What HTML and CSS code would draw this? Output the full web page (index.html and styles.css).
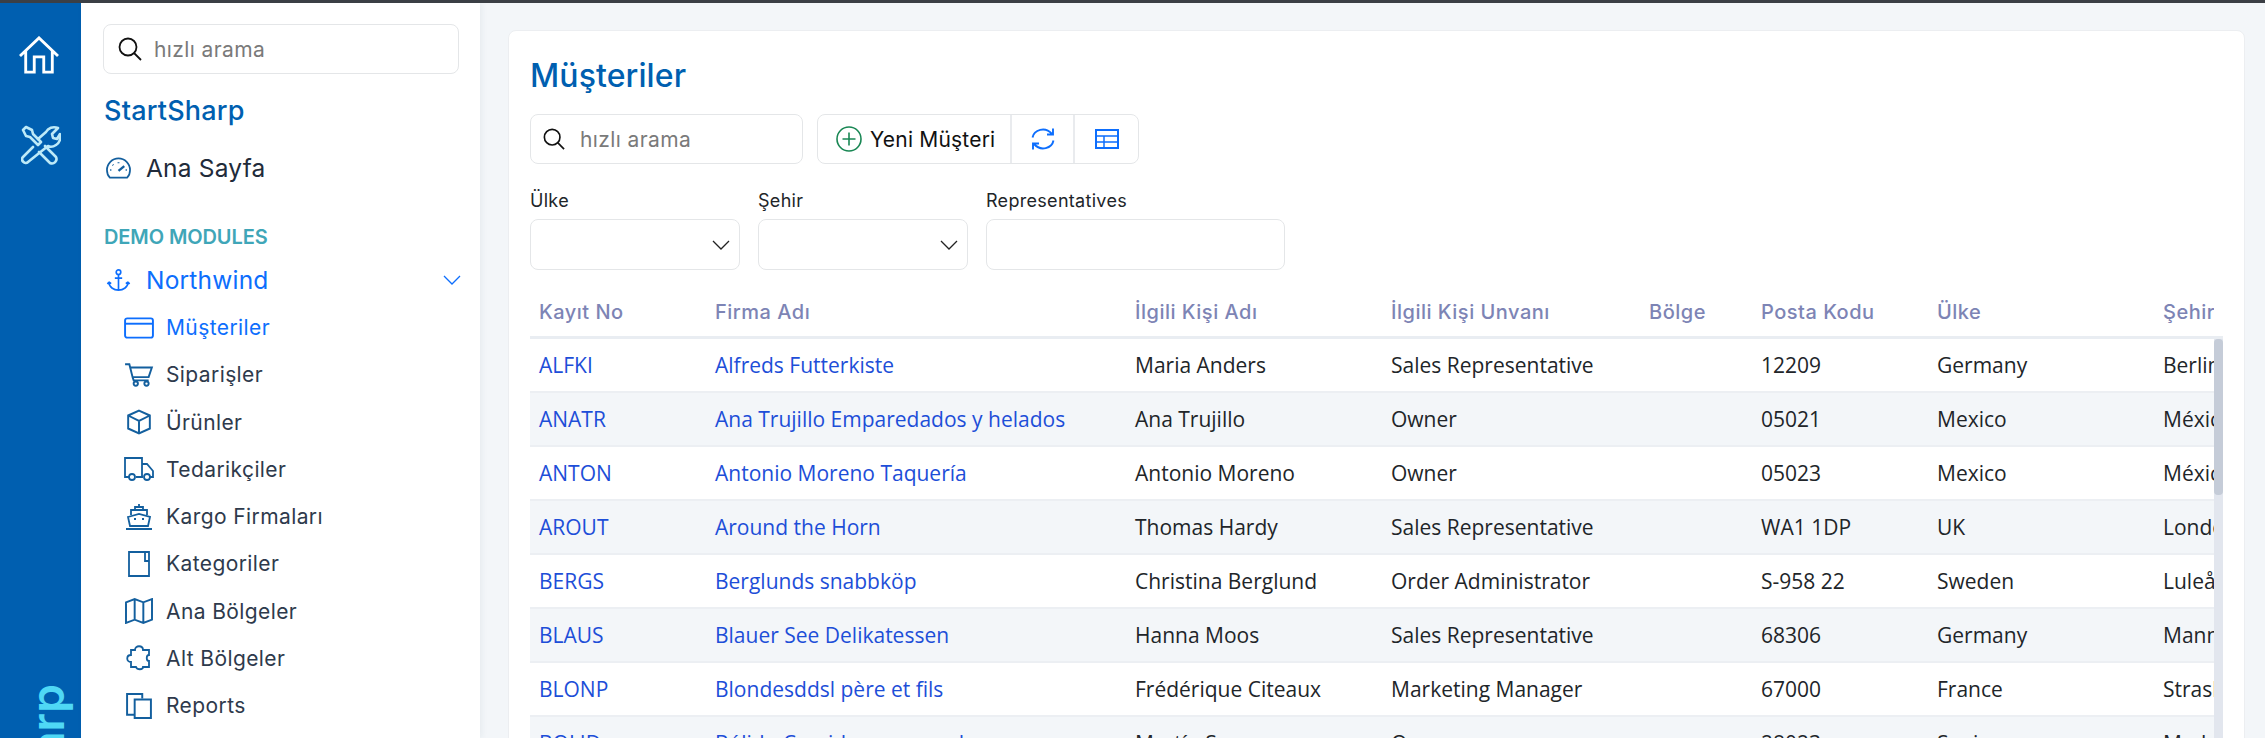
FILE: index.html
```html
<!DOCTYPE html>
<html lang="tr">
<head>
<meta charset="utf-8">
<title>Müşteriler</title>
<link rel="stylesheet" href="styles.css">
</head>
<body>
<div class="topbar"></div>
<div class="shell">
  <aside class="rail">
    <svg class="rail-home" viewBox="0 0 42 40" fill="none" stroke="#fff" stroke-width="3"><path d="M1 21 21 2l20 19M7 16v22h9V22h10v16h9V16"/></svg>
    <svg class="rail-tools" viewBox="0 0 40 40" fill="none" stroke="#bdeaf8" stroke-width="2.600" stroke-linejoin="round" stroke-linecap="round"><path d="M2 5l3-3 6 3 1 4 8 8-3 3-8-8-4-1zM24 21l11 11a4.500 4.500 0 0 1-6 6L18 27"/><path d="M17 14 25 7c2-4 7-6 12-4l-6 6 1 4 4 1 3-5c1 5-1 9-4 11-3 2-6 2-8 1L7 37c-3 3-8-2-5-5l10-10"/></svg>
    <div class="rail-logo">StartSharp</div>
  </aside>
  <nav class="sidebar">
    <div class="search side-search">
      <svg class="search-icon" viewBox="0 0 24 24" fill="none" stroke="#111" stroke-width="1.800"><circle cx="10" cy="10" r="8.500"/><path d="M16 16l7 7"/></svg>
      <span class="placeholder">hızlı arama</span>
    </div>
    <div class="brand">StartSharp</div>
    <div class="nav-top">
      <svg class="nav-icon" viewBox="0 0 26 22" fill="none" stroke="#135f9e" stroke-width="1.800"><path d="M4 21C2 19 1 16 1 13a12 12 0 0 1 24 0c0 3-1 6-3 8z"/><path d="M13 14l6-5" stroke-width="2.400"/><path d="M4.500 13h1M7 7.500l.6.6M13 5v1M20.500 13h1" stroke-width="2"/></svg>
      <span>Ana Sayfa</span>
    </div>
    <div class="nav-section">DEMO MODULES</div>
    <div class="nav-top nav-active">
      <svg class="nav-icon" viewBox="0 0 24 24" fill="none" stroke="#0d6efd" stroke-width="1.800"><circle cx="12" cy="3.500" r="2.500"/><path d="M12 6v17M8 10h8M1.500 14c0 6 5.500 9 10.500 9s10.500-3 10.500-9M1.500 14l-1.500 2.500M1.500 14l2.500 2M22.500 14l-2.500 2M22.500 14l1.500 2.500"/></svg>
      <span>Northwind</span>
      <svg class="nav-chevron" viewBox="0 0 18 10" fill="none" stroke="#0d6efd" stroke-width="1.300"><path d="M1 1l8 8 8-8"/></svg>
    </div>
    <div class="nav-sub nav-current">
      <svg class="sub-icon" viewBox="0 0 28 20" fill="none" stroke="#0d6efd" stroke-width="1.800"><rect x="1" y="1" width="26" height="18" rx="2"/><path d="M1 6h26"/></svg>
      <span>Müşteriler</span>
    </div>
    <div class="nav-sub">
      <svg class="sub-icon" viewBox="0 0 28 22" fill="none" stroke="#135f9e" stroke-width="1.800"><path d="M1 1h4l3 12h15l3-9H6M8 13l1 3h14"/><circle cx="11" cy="19" r="2"/><circle cx="21" cy="19" r="2"/></svg>
      <span>Siparişler</span>
    </div>
    <div class="nav-sub">
      <svg class="sub-icon" viewBox="0 0 24 24" fill="none" stroke="#135f9e" stroke-width="1.800"><path d="M12 1.500 22 6v12l-10 4.500L2 18V6zM2 6l10 5 10-5M12 11v11.500"/></svg>
      <span>Ürünler</span>
    </div>
    <div class="nav-sub">
      <svg class="sub-icon" viewBox="0 0 30 24" fill="none" stroke="#135f9e" stroke-width="1.800"><path d="M5 20H1V1h17v19h-6M18 7h5l6 7v6h-3M18 20h1"/><circle cx="8" cy="20" r="3"/><circle cx="23" cy="20" r="3"/></svg>
      <span>Tedarikçiler</span>
    </div>
    <div class="nav-sub">
      <svg class="sub-icon" viewBox="0 0 26 26" fill="none" stroke="#135f9e" stroke-width="1.800"><path d="M13 0v3M9 6V3h8v3M5 11V6h16v5M2 13l11-3 11 3-2 9H4zM0 25h26"/><path d="M8 15h2M16 15h2" stroke-width="2"/></svg>
      <span>Kargo Firmaları</span>
    </div>
    <div class="nav-sub">
      <svg class="sub-icon" viewBox="0 0 24 26" fill="none" stroke="#135f9e" stroke-width="1.800"><path d="M2 1h20v24H2zM18 1v9h4"/></svg>
      <span>Kategoriler</span>
    </div>
    <div class="nav-sub">
      <svg class="sub-icon" viewBox="0 0 26 24" fill="none" stroke="#135f9e" stroke-width="1.800"><path d="M1 4l8-3 8 3 8-3v19l-8 3-8-3-8 3zM9 1v19M17 4v19"/></svg>
      <span>Ana Bölgeler</span>
    </div>
    <div class="nav-sub">
      <svg class="sub-icon" viewBox="0 0 26 26" fill="none" stroke="#135f9e" stroke-width="1.800"><path d="M9 5c0-5 8-5 8 0h6v5c-3 0-3 6 0 6v6h-6c0 3-6 3-7 0H5v-5c-5 0-5-7 0-7V5z"/></svg>
      <span>Alt Bölgeler</span>
    </div>
    <div class="nav-sub">
      <svg class="sub-icon" viewBox="0 0 24 24" fill="none" stroke="#135f9e" stroke-width="1.800"><path d="M8 20H1V1h14v4"/><path d="M8 6h15v17H8z"/></svg>
      <span>Reports</span>
    </div>
  </nav>
  <main class="content">
    <section class="card">
      <h1 class="title">Müşteriler</h1>
      <div class="toolbar">
        <div class="search tool-search">
          <svg class="search-icon small" viewBox="0 0 24 24" fill="none" stroke="#111" stroke-width="1.800"><circle cx="10" cy="10" r="8.500"/><path d="M16 16l7 7"/></svg>
          <span class="placeholder">hızlı arama</span>
        </div>
        <div class="btn-group">
          <div class="btn btn-new">
            <svg class="btn-plus" viewBox="0 0 26 26" fill="none" stroke="#198754" stroke-width="1.600"><circle cx="13" cy="13" r="12"/><path d="M13 6.500v13M6.500 13h13"/></svg>
            <span>Yeni Müşteri</span>
          </div>
          <div class="btn btn-refresh">
            <svg class="btn-icon" viewBox="0 0 24 24" fill="none" stroke="#0d6efd" stroke-width="1.900"><path d="M1.500 10.500C3 3 14-1 21 7M22 1.500V7.500h-6M22.500 13.500C21 21 10 25 3 17M2 22.500V16.500h6"/></svg>
          </div>
          <div class="btn btn-table">
            <svg class="btn-icon wide" viewBox="0 0 24 20" fill="none" stroke="#0d6efd" stroke-width="2"><rect x="1" y="1" width="22" height="18"/><path d="M1 7h22M1 13h22M9 7v12" stroke-width="1.500"/></svg>
          </div>
        </div>
      </div>
      <div class="filters">
        <div class="filter f-country"><label class="filter-label">Ülke</label>
          <div class="filter-box"><svg class="select-chevron" viewBox="0 0 18 10" fill="none" stroke="#222" stroke-width="1.300"><path d="M1 1l8 8 8-8"/></svg></div></div>
        <div class="filter f-city"><label class="filter-label">Şehir</label>
          <div class="filter-box"><svg class="select-chevron" viewBox="0 0 18 10" fill="none" stroke="#222" stroke-width="1.300"><path d="M1 1l8 8 8-8"/></svg></div></div>
        <div class="filter f-rep"><label class="filter-label">Representatives</label>
          <div class="filter-box"></div></div>
      </div>
      <div class="grid">
        <div class="row head"><div>Kayıt No</div><div>Firma Adı</div><div>İlgili Kişi Adı</div><div>İlgili Kişi Unvanı</div><div>Bölge</div><div>Posta Kodu</div><div>Ülke</div><div class="head-last">Şehir</div></div>
        <div class="viewport">
          <div class="scrollbar"><div class="thumb"></div></div>
          <div class="row"><div class="link">ALFKI</div><div class="link">Alfreds Futterkiste</div><div>Maria Anders</div><div>Sales Representative</div><div></div><div>12209</div><div>Germany</div><div>Berlin</div></div>
          <div class="row alt"><div class="link">ANATR</div><div class="link">Ana Trujillo Emparedados y helados</div><div>Ana Trujillo</div><div>Owner</div><div></div><div>05021</div><div>Mexico</div><div>México D.F.</div></div>
          <div class="row"><div class="link">ANTON</div><div class="link">Antonio Moreno Taquería</div><div>Antonio Moreno</div><div>Owner</div><div></div><div>05023</div><div>Mexico</div><div>México D.F.</div></div>
          <div class="row alt"><div class="link">AROUT</div><div class="link">Around the Horn</div><div>Thomas Hardy</div><div>Sales Representative</div><div></div><div>WA1 1DP</div><div>UK</div><div>London</div></div>
          <div class="row"><div class="link">BERGS</div><div class="link">Berglunds snabbköp</div><div>Christina Berglund</div><div>Order Administrator</div><div></div><div>S-958 22</div><div>Sweden</div><div>Luleå</div></div>
          <div class="row alt"><div class="link">BLAUS</div><div class="link">Blauer See Delikatessen</div><div>Hanna Moos</div><div>Sales Representative</div><div></div><div>68306</div><div>Germany</div><div>Mannheim</div></div>
          <div class="row"><div class="link">BLONP</div><div class="link">Blondesddsl père et fils</div><div>Frédérique Citeaux</div><div>Marketing Manager</div><div></div><div>67000</div><div>France</div><div>Strasbourg</div></div>
          <div class="row alt"><div class="link">BOLID</div><div class="link">Bólido Comidas preparadas</div><div>Martín Sommer</div><div>Owner</div><div></div><div>28023</div><div>Spain</div><div>Madrid</div></div>
        </div>
      </div>
    </section>
  </main>
</div>
</body>
</html>
```
FILE: styles.css
```css
* { box-sizing: border-box; }
html, body { margin: 0; height: 738px; overflow: hidden; }
body { font-family: Inter, "Liberation Sans", sans-serif; background: #f3f6f9; color: #212529; }
.topbar { height: 3px; background: #3b3f45; }
.shell { display: flex; height: 735px; overflow: hidden; }

.rail { width: 81px; flex: none; background: #005fb0; display: flex; flex-direction: column; align-items: center; overflow: hidden; }
.rail-home { width: 44px; height: 38px; margin-top: 33px; margin-right: 3px; flex: none; }
.rail-tools { width: 40px; height: 40px; margin-top: 51px; flex: none; }
.rail-logo { writing-mode: vertical-rl; transform: rotate(180deg); margin-top: auto; margin-bottom: -186px; margin-left: 12px; font-size: 46px; font-weight: 600; line-height: 48px; color: #4fd8f5; flex: none; }

.sidebar { width: 399px; flex: none; background: #fff; padding: 21px 21px 0 22px; box-shadow: 2px 0 6px rgba(40, 60, 90, .06); overflow: hidden; }
.search { display: flex; align-items: center; border: 1px solid #e4e6e8; border-radius: 8px; background: #fff; }
.side-search { height: 50px; padding-left: 14px; }
.search-icon { width: 24px; height: 24px; flex: none; margin-right: 12px; }
.search-icon.small { width: 22px; height: 22px; margin-right: 15px; }
.placeholder { font-size: 21px; color: #7a7a7a; letter-spacing: .4px; }
.brand { margin-top: 12px; font-size: 27px; font-weight: 500; line-height: 50px; color: #005fb0; letter-spacing: .2px; padding-left: 1px; }
.nav-top { display: flex; align-items: center; height: 48px; font-size: 24.500px; font-weight: 400; color: #212b3a; padding-left: 3px; letter-spacing: .2px; }
.brand + .nav-top { margin-top: 8px; }
.nav-icon { width: 25px; height: 22px; flex: none; margin-right: 15px; }
.nav-section { margin-top: 31px; font-size: 20px; font-weight: 600; color: #3fa6b8; line-height: 28px; padding-left: 1px; letter-spacing: -.1px; }
.nav-section + .nav-top { margin-top: 5px; height: 48px; }
.nav-active { color: #0d6efd; }
.nav-chevron { width: 18px; height: 10px; margin-left: auto; margin-right: -2px; }
.nav-sub { display: flex; align-items: center; height: 47.250px; padding-left: 21px; font-size: 21px; letter-spacing: .4px; color: #2e3a4c; }
.nav-sub span { margin-left: 12px; }
.nav-current { color: #0d6efd; }
.sub-icon { width: 30px; height: 26px; flex: none; }

.content { flex: 1; min-width: 0; padding: 27px 20px 0 28px; }
.card { height: 760px; background: #fff; border: 1px solid #eceef1; border-radius: 8px; padding: 0 21px; overflow: hidden; }
.title { margin: 23px 0 0; font-size: 32px; font-weight: 500; line-height: 44px; color: #005fb0; letter-spacing: .1px; }
.toolbar { display: flex; gap: 14px; margin-top: 16px; height: 50px; }
.tool-search { width: 273px; height: 50px; padding-left: 12px; }
.btn-group { display: flex; width: 322px; height: 50px; border: 1px solid #e4e6e8; border-radius: 8px; }
.btn { display: flex; align-items: center; height: 100%; }
.btn-new { width: 194px; padding-left: 18px; font-size: 21px; color: #111; border-right: 2px solid #e9ebee; letter-spacing: .2px; }
.btn-plus { width: 26px; height: 26px; margin-right: 8px; flex: none; }
.btn-refresh { width: 63px; justify-content: center; border-right: 2px solid #e9ebee; }
.btn-table { flex: 1; justify-content: center; }
.btn-icon { width: 24px; height: 24px; }
.btn-icon.wide { height: 20px; }
.filters { display: flex; gap: 18px; margin-top: 25px; }
.f-country, .f-city { width: 210px; }
.f-rep { width: 299px; }
.filter-label { display: block; font-size: 18px; line-height: 24px; color: #212529; letter-spacing: .3px; }
.filter-box { display: flex; align-items: center; justify-content: flex-end; height: 51px; margin-top: 6px; padding-right: 9px; border: 1px solid #e4e6e8; border-radius: 8px; }
.select-chevron { width: 18px; height: 10px; }

.grid { margin-top: 16px; width: 1693px; font-family: "Open Sans", sans-serif; font-size: 21px; }
.row { display: grid; grid-template-columns: 176px 420px 256px 258px 112px 176px 226px 300px; align-items: center; height: 54px; border-bottom: 2px solid #eceff3; white-space: nowrap; color: #212529; }
.row > div { padding-left: 9px; }
.row.alt { background: #f3f6f9; }
.link { color: #1d4ed8; }
.row.head { height: 53px; border-bottom: 3px solid #e9edf2; font-family: Inter, sans-serif; font-size: 20px; font-weight: 500; letter-spacing: .5px; color: #7d84b5; overflow: hidden; padding-top: 1px; }
.row.head .head-last { width: 60px; overflow: hidden; }
.viewport { position: relative; overflow: hidden; height: 400px; }
.scrollbar { position: absolute; z-index: 1; top: 0; right: 0; bottom: 0; width: 9px; background: #e2e6ee; }
.thumb { height: 156px; background: #c5ccd8; border-radius: 4px; }
```
